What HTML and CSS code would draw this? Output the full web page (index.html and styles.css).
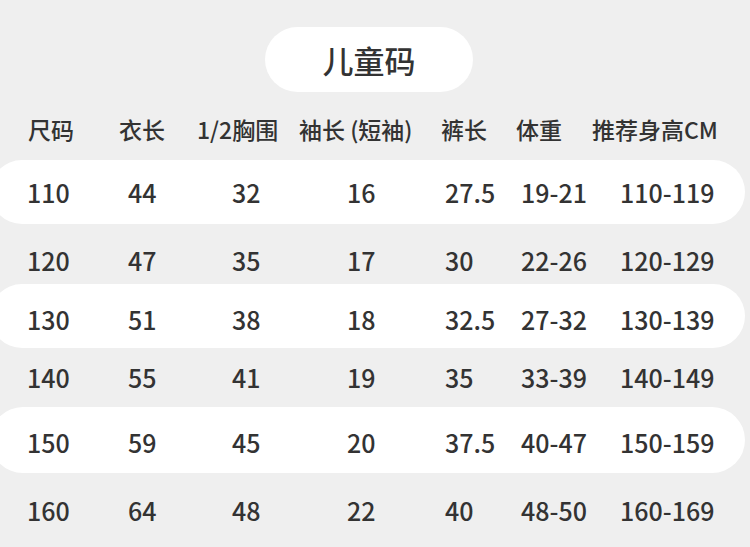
FILE: index.html
```html
<!DOCTYPE html>
<html lang="zh">
<head>
<meta charset="utf-8">
<link rel="stylesheet" href="styles.css">
</head>
<body>
<div class="page">
  <div class="title-wrap"><div class="title">儿童码</div></div>
  <div class="row head">
    <span>尺码</span><span>衣长</span><span>1/2胸围</span><span>袖长 (短袖)</span><span>裤长</span><span>体重</span><span>推荐身高CM</span>
  </div>
  <div class="row data band r1">
    <span>110</span><span>44</span><span>32</span><span>16</span><span>27.5</span><span>19-21</span><span>110-119</span>
  </div>
  <div class="row data r2">
    <span>120</span><span>47</span><span>35</span><span>17</span><span>30</span><span>22-26</span><span>120-129</span>
  </div>
  <div class="row data band r3">
    <span>130</span><span>51</span><span>38</span><span>18</span><span>32.5</span><span>27-32</span><span>130-139</span>
  </div>
  <div class="row data r4">
    <span>140</span><span>55</span><span>41</span><span>19</span><span>35</span><span>33-39</span><span>140-149</span>
  </div>
  <div class="row data band r5">
    <span>150</span><span>59</span><span>45</span><span>20</span><span>37.5</span><span>40-47</span><span>150-159</span>
  </div>
  <div class="row data r6">
    <span>160</span><span>64</span><span>48</span><span>22</span><span>40</span><span>48-50</span><span>160-169</span>
  </div>
</div>
</body>
</html>
```

FILE: styles.css
```css
html, body {
  margin: 0;
  padding: 0;
  background: #efefef;
}
body {
  width: 750px;
  height: 547px;
  overflow: hidden;
  font-family: "Noto Sans CJK SC", "Noto Sans", sans-serif;
  font-weight: 500;
  color: #333;
}
.page {
  display: flex;
  flex-direction: column;
  padding-top: 27px;
}
.title-wrap {
  display: flex;
  padding-left: 265px;
}
.title {
  width: 208px;
  height: 65px;
  border-radius: 33px;
  background: #fff;
  display: flex;
  align-items: center;
  justify-content: center;
  font-size: 31px;
  line-height: 1;
}
.row {
  display: grid;
  align-items: center;
  margin-left: -10px;
  width: 755px;
  box-sizing: border-box;
  white-space: nowrap;
  line-height: 1;
}
.head {
  grid-template-columns: 91px 78px 102px 142px 75px 76px 1fr;
  padding-left: 38px;
  height: 68px;
  padding-top: 6px;
  font-size: 23px;
}
.data {
  grid-template-columns: 101px 104px 115px 98px 76px 99px 1fr;
  padding-left: 37px;
  font-size: 25px;
}
.band {
  background: #fff;
  border-radius: 33px;
}
.r1 { height: 64px; }
.r2 { height: 60px; padding-top: 12px; }
.r3 { height: 64px; padding-top: 6px; }
.r4 { height: 59px; }
.r5 { height: 66px; padding-top: 4px; }
.r6 { height: 74px; }
```
